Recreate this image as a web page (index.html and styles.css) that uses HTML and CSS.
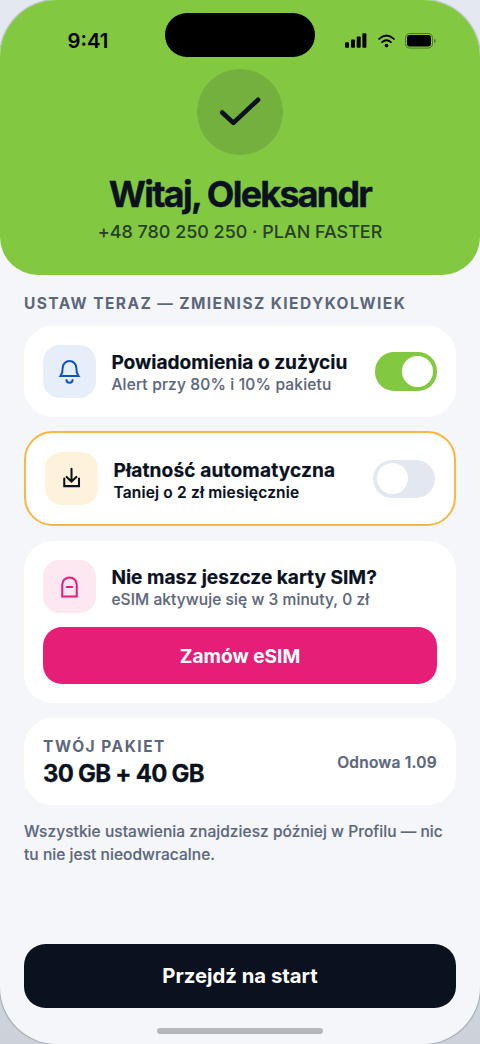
FILE: index.html
```html
<!DOCTYPE html>
<html lang="pl">
<head>
<meta charset="utf-8">
<title>Witaj</title>
<link rel="stylesheet" href="styles.css">
</head>
<body>
<div class="phone">
  <header class="hero">
    <div class="status">
      <span class="time">9:41</span>
      <span class="island"></span>
      <span class="indicators">
        <svg width="22" height="15" viewBox="0 0 22 15"><rect x="0" y="9.3" width="4" height="5.4" rx="1"/><rect x="6" y="6.4" width="4" height="8.3" rx="1"/><rect x="11.7" y="3.4" width="4" height="11.3" rx="1"/><rect x="17.4" y="0.2" width="4" height="14.5" rx="1"/></svg>
        <svg class="wifi" width="17" height="14" viewBox="0 0 17 14"><g fill="none" stroke="#000" stroke-width="1.9" stroke-linecap="round"><path d="M1.2 4.9Q8.5-1.8 15.8 4.9"/><path d="M4.1 8.1Q8.5 4.2 12.9 8.1"/></g><circle cx="8.5" cy="11.6" r="1.8"/></svg>
        <svg width="31" height="16" viewBox="0 0 31 16"><rect x=".5" y=".5" width="27" height="14.6" rx="4.3" fill="none" stroke="#000" stroke-opacity=".4"/><rect x="2" y="2.1" width="24" height="11.4" rx="2.7"/><path d="M29.2 5.8v4.2q1.5-.5 1.5-2.1t-1.5-2.1z" fill-opacity=".45"/></svg>
      </span>
    </div>
    <div class="badge"><svg width="48" height="48" viewBox="0 0 48 48"><path d="M6.2 24.500L17.400 34.900 42.100 11.700"/></svg></div>
    <h1 class="title">Witaj, Oleksandr</h1>
    <p class="plan">+48 780 250 250 · PLAN FASTER</p>
  </header>
  <main class="content">
    <h2 class="section">USTAW TERAZ — ZMIENISZ KIEDYKOLWIEK</h2>
    <section class="card">
      <div class="row">
        <span class="icon icon-blue"><svg width="29" height="29" viewBox="0 0 24 24"><path d="M4.600 15.700h14.800c-1.500-2-1.800-3.900-1.800-6.800a5.600 5.600 0 0 0-11.200 0c0 2.900-.3 4.800-1.800 6.800zM9.500 19a2.500 2.300 0 0 0 5 0"/></svg></span>
        <div class="texts"><h3 class="name">Powiadomienia o zużyciu</h3><p class="sub">Alert przy 80% i 10% pakietu</p></div>
        <span class="toggle toggle-on"></span>
      </div>
    </section>
    <section class="card card-accent">
      <div class="row">
        <span class="icon icon-yellow"><svg width="29" height="29" viewBox="0 0 24 24"><path d="M12 4v10.500M8 10.700l4 3.800 4-3.800M6 12v6.300h12.200v-6.300"/></svg></span>
        <div class="texts"><h3 class="name name-pay">Płatność automatyczna</h3><p class="sub sub-strong">Taniej o 2 zł miesięcznie</p></div>
        <span class="toggle"></span>
      </div>
    </section>
    <section class="card">
      <div class="row">
        <span class="icon icon-pink"><svg width="29" height="29" viewBox="0 0 24 24"><path d="M6 20.200v-9.700a6 6 0 0 1 12 0v9.700zM9.700 12.400h4.600"/></svg></span>
        <div class="texts"><h3 class="name">Nie masz jeszcze karty SIM?</h3><p class="sub sub-sim">eSIM aktywuje się w 3 minuty, 0 zł</p></div>
      </div>
      <button class="button button-pink">Zamów eSIM</button>
    </section>
    <section class="card package">
      <div><h2 class="caption">TWÓJ PAKIET</h2><p class="amount">30 GB + 40 GB</p></div>
      <span class="renewal">Odnowa 1.09</span>
    </section>
    <p class="note">Wszystkie ustawienia znajdziesz później w Profilu — nic<br>tu nie jest nieodwracalne.</p>
  </main>
  <footer class="footer">
    <button class="button button-dark">Przejdź na start</button>
    <span class="home"></span>
  </footer>
</div>
</body>
</html>
```
FILE: styles.css
```css
* { box-sizing: border-box; }
body { margin: 0; background: linear-gradient(#e4e8f0 0%, #e1e5ed 60%, #cdd2da 100%); font-family: Inter, sans-serif; color: #0b121f; }
h1, h2, h3, p { margin: 0; white-space: nowrap; }
.phone { display: flex; flex-direction: column; width: 480px; height: 1044px; overflow: hidden; border-radius: 57px; background: #f4f6fa; box-shadow: 0 0 1px 1px rgba(11, 18, 31, .22); }
.hero { display: flex; flex-direction: column; align-items: center; height: 274.600px; flex: none; background: #82c941; border-radius: 0 0 38px 38px; }
.status { display: grid; grid-template-columns: 165px 150px 165px; width: 480px; height: 69px; padding-top: 13px; color: #000; }
.time { padding: 17px 0 0 67.500px; font-size: 20.300px; line-height: 22px; font-weight: 600; }
.island { height: 44px; border-radius: 22px; background: #000; }
.indicators { display: flex; align-items: flex-start; padding: 19.500px 0 0 30px; }
.wifi { margin: 1px 10px 0 11px; }
.badge { display: grid; place-items: center; width: 86px; height: 86px; border-radius: 50%; background: #74b03d; }
.badge svg { fill: none; stroke: #0b121f; stroke-width: 4.600; stroke-linecap: round; stroke-linejoin: round; }
.title { margin-top: 18px; font-size: 35.800px; line-height: 42px; font-weight: 700; letter-spacing: -1.700px; -webkit-text-stroke: .4px currentColor; }
.plan { margin-top: 6px; font-size: 17.900px; line-height: 22px; font-weight: 500; letter-spacing: .020px; color: rgba(11, 18, 31, .75); -webkit-text-stroke: .15px currentColor; }
.content { display: flex; flex-direction: column; gap: 14.500px; padding: 19px 24px 0; }
.section { font-size: 15.500px; line-height: 19px; font-weight: 700; letter-spacing: 1.420px; color: #5d677b; margin-bottom: -1px; }
.card { padding: 19.100px; border-radius: 28.600px; background: #fff; }
.card-accent { margin-bottom: .5px; border: 2.400px solid #f9b642; }
.row { display: flex; align-items: center; gap: 15.800px; }
.texts { flex: 1; min-width: 0; }
.icon { display: grid; place-items: center; flex: none; width: 52.500px; height: 52.500px; border-radius: 16.700px; }
.icon svg { fill: none; stroke: currentColor; stroke-width: 1.700; stroke-linejoin: miter; stroke-linecap: round; }
.icon-blue { background: #e6eefa; color: #1254c0; }
.icon-yellow { background: #fff2db; color: #0b121f; }
.icon-pink { background: #fde7f0; color: #e71e78; }
.name { padding-top: 1px; font-size: 19.100px; line-height: 26px; font-weight: 700; -webkit-text-stroke: .2px currentColor; }
.name-pay { letter-spacing: .140px; }
.sub { font-size: 15.500px; line-height: 19px; font-weight: 500; letter-spacing: .180px; color: #5d677b; -webkit-text-stroke: .15px currentColor; }
.sub-strong { color: #0b121f; font-weight: 600; }
.sub-sim { letter-spacing: .090px; }
.toggle { flex: none; width: 62px; height: 38.200px; padding: 3.600px; border-radius: 19.100px; background: #e3e7f0; }
.toggle::before { content: ""; display: block; width: 31px; height: 31px; border-radius: 50%; background: #fff; }
.toggle-on { background: #82c941; }
.toggle-on::before { margin-left: auto; }
.button { display: block; width: 100%; padding: 0; border: 0; font: 700 19.100px/24px Inter, sans-serif; color: #fff; }
.button-pink { height: 57.300px; margin-top: 14px; padding-top: 1px; border-radius: 19.100px; background: #e71e78; }
.package { display: flex; align-items: center; justify-content: space-between; height: 87.500px; margin-top: .5px; }
.caption { margin-top: 2px; font-size: 15.500px; line-height: 19px; font-weight: 700; letter-spacing: 1.500px; color: #5d677b; }
.amount { margin-top: 2px; font-size: 23.900px; line-height: 31px; font-weight: 700; letter-spacing: -.720px; -webkit-text-stroke: .3px currentColor; }
.renewal { padding-top: 1px; font-size: 15.500px; font-weight: 600; letter-spacing: .220px; color: #5d677b; -webkit-text-stroke: .2px currentColor; }
.note { font-size: 15.500px; line-height: 23px; font-weight: 500; letter-spacing: .050px; color: #5d677b; -webkit-text-stroke: .15px currentColor; }
.footer { display: flex; flex-direction: column; align-items: center; margin-top: auto; padding: 0 24px 10px; }
.button-dark { height: 64.500px; padding-top: 1px; border-radius: 21.500px; background: #0b121f; font-size: 20.300px; }
.home { width: 166px; height: 6px; margin-top: 20px; border-radius: 3px; background: #b6b7ba; }
```
